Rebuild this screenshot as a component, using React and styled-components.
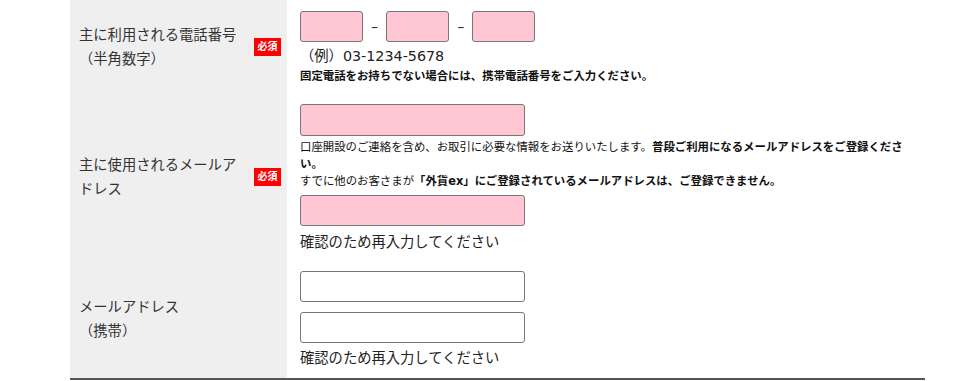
import React from 'react';
import styled, { createGlobalStyle } from 'styled-components';

const GlobalStyle = createGlobalStyle`
  body {
    margin: 0;
    background: #fff;
    font-family: "DejaVu Sans", "Noto Sans CJK JP", sans-serif;
    color: #222;
  }
`;

const Table = styled.div`
  margin-left: 70px;
  width: 855px;
  border-bottom: 2px solid #555;
`;

const Row = styled.div`
  display: grid;
  grid-template-columns: 217px 1fr;
`;

const LabelCell = styled.div`
  display: flex;
  align-items: center;
  justify-content: space-between;
  background: #efefef;
  padding: 0 6px 0 9px;
`;

const LabelText = styled.div`
  width: 165px;
  font-size: 14.3px;
  line-height: 24px;
  color: #333;
`;

const Sub = styled.span`
  display: block;
`;

const Badge = styled.span`
  background: #ff0000;
  color: #fff;
  font-weight: bold;
  font-size: 10px;
  line-height: 14px;
  padding: 2px 3.5px;
`;

const ValueCell = styled.div`
  padding: ${(p) => p.$pad || '11px 13px 8px'};
  display: flex;
  flex-direction: column;
  align-items: flex-start;
`;

const PhoneRow = styled.div`
  display: flex;
  align-items: center;
`;

const Dash = styled.span`
  font-size: 14.3px;
  margin: 0 8px;
  color: #333;
`;

const Input = styled.input`
  box-sizing: border-box;
  width: ${(p) => p.$w || 225}px;
  height: ${(p) => p.$h || 31}px;
  margin: 0;
  margin-top: ${(p) => p.$mt || 0}px;
  border: 1px solid #777;
  border-radius: 3px;
  background: ${(p) => (p.$required ? '#ffc6d4' : '#fff')};
  outline: none;
`;

const Hint = styled.div`
  font-size: 14.3px;
  line-height: 24px;
  margin-top: ${(p) => p.$mt || 0}px;
`;

const Note = styled.div`
  font-size: 11.4px;
  line-height: 17px;
  margin-top: ${(p) => p.$mt || 0}px;
  font-weight: ${(p) => (p.$bold ? 'bold' : 'normal')};
  color: #111;

  b {
    font-weight: bold;
  }
`;

export default function App() {
  return (
    <>
      <GlobalStyle />
      <Table>
        <Row>
          <LabelCell>
            <LabelText>
              主に利用される電話番号
              <Sub>（半角数字）</Sub>
            </LabelText>
            <Badge>必須</Badge>
          </LabelCell>
          <ValueCell $pad="11px 13px 8px">
            <PhoneRow>
              <Input $required $w={63} />
              <Dash>–</Dash>
              <Input $required $w={63} />
              <Dash>–</Dash>
              <Input $required $w={63} />
            </PhoneRow>
            <Hint $mt={2}>（例）03-1234-5678</Hint>
            <Note $bold>固定電話をお持ちでない場合には、携帯電話番号をご入力ください。</Note>
          </ValueCell>
        </Row>
        <Row>
          <LabelCell>
            <LabelText>主に使用されるメールアドレス</LabelText>
            <Badge>必須</Badge>
          </LabelCell>
          <ValueCell $pad="11px 13px 6px">
            <Input $required $h={32} />
            <Note $mt={3}>
              口座開設のご連絡を含め、お取引に必要な情報をお送りいたします。
              <b>普段ご利用になるメールアドレスをご登録ください。</b>
              <br />
              すでに他のお客さまが<b>「外貨ex」にご登録されているメールアドレスは、ご登録できません。</b>
            </Note>
            <Input $required $mt={5} />
            <Hint $mt={4}>確認のため再入力してください</Hint>
          </ValueCell>
        </Row>
        <Row>
          <LabelCell>
            <LabelText>
              メールアドレス
              <Sub>（携帯）</Sub>
            </LabelText>
          </LabelCell>
          <ValueCell $pad="11px 13px 8px">
            <Input />
            <Input $mt={10} />
            <Hint $mt={3}>確認のため再入力してください</Hint>
          </ValueCell>
        </Row>
      </Table>
    </>
  );
}
